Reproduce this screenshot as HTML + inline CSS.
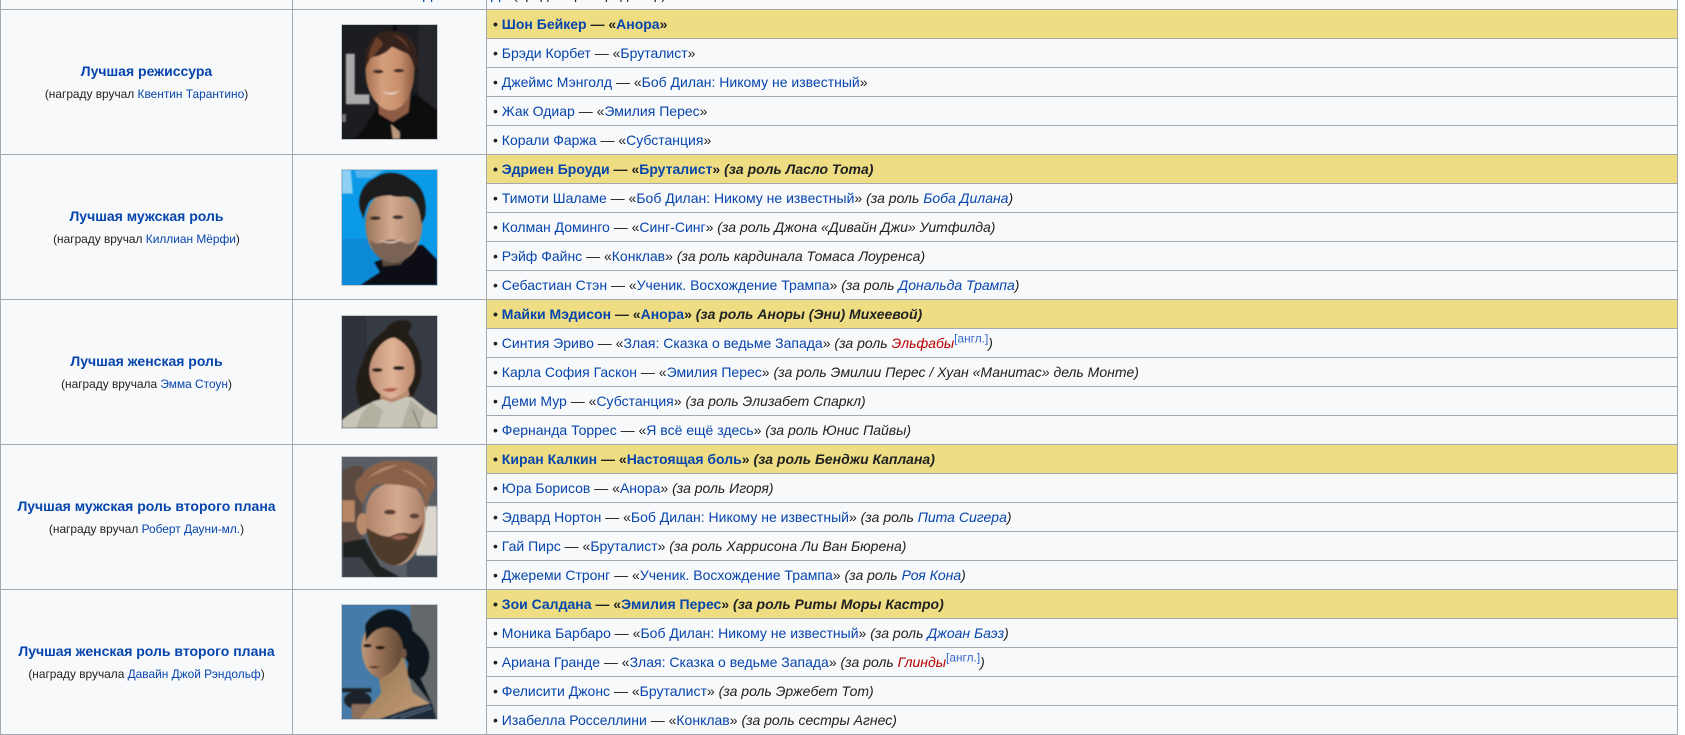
<!DOCTYPE html>
<html lang="ru"><head><meta charset="utf-8"><title>Награды</title>
<style>
html,body{margin:0;padding:0;background:#fff;width:1685px;height:735px;overflow:hidden}
body{position:relative;font-family:"Liberation Sans",Arial,sans-serif;font-size:14px;color:#202122}
a{color:#0645ad;text-decoration:none}
a.new{color:#ba0000}
.bg{position:absolute;left:0;top:0;width:1678px;height:735px;background:#f8f9fa}
.h{position:absolute;left:0;width:1678px;height:1px;background:#a2a9b1}
.v{position:absolute;top:0;width:1px;height:735px;background:#a2a9b1}
.r{position:absolute;left:487px;width:1190px;height:28px;line-height:28px;padding:0;white-space:nowrap;border-bottom:1px solid #a2a9b1;text-indent:6px}
.w{background:#eedd82;font-weight:bold}
.t{position:absolute;left:1px;width:291px;text-align:center;font-weight:bold;line-height:22px;white-space:nowrap}
.s{position:absolute;left:1px;width:291px;text-align:center;font-size:11.9px;line-height:22px;white-space:nowrap}
.p{position:absolute;left:341px;width:95px;border:1px solid #c8ccd1;overflow:hidden}
.p svg{display:block;width:95px;height:100%}
sup{font-size:11.9px;line-height:0;vertical-align:super;font-style:normal}
sup a{color:#36c}
.top{position:absolute;top:-14px;line-height:16px;white-space:nowrap}
</style></head><body>
<div class="bg"></div>
<div class="top" style="left:423px;width:260px;color:#202122"><a href="#">Д</a><span style="position:absolute;left:68px"><a href="#">Д</a></span><span style="position:absolute;left:90px">(продюсер и продюсер)</span></div>
<div class="v" style="left:0"></div><div class="v" style="left:292px"></div><div class="v" style="left:486px"></div><div class="v" style="left:1677px"></div>
<div class="h" style="top:9px"></div><div class="h" style="top:154px"></div><div class="h" style="top:299px"></div><div class="h" style="top:444px"></div><div class="h" style="top:589px"></div><div class="h" style="top:734px"></div>

<div class="t" style="top:60px"><a href="#">Лучшая режиссура</a></div>
<div class="s" style="top:83px">(награду вручал <a href="#">Квентин Тарантино</a>)</div>
<div class="t" style="top:205px"><a href="#">Лучшая мужская роль</a></div>
<div class="s" style="top:228px">(награду вручал <a href="#">Киллиан Мёрфи</a>)</div>
<div class="t" style="top:350px"><a href="#">Лучшая женская роль</a></div>
<div class="s" style="top:373px">(награду вручала <a href="#">Эмма Стоун</a>)</div>
<div class="t" style="top:495px"><a href="#">Лучшая мужская роль второго плана</a></div>
<div class="s" style="top:518px">(награду вручал <a href="#">Роберт Дауни-мл.</a>)</div>
<div class="t" style="top:640px"><a href="#">Лучшая женская роль второго плана</a></div>
<div class="s" style="top:663px">(награду вручала <a href="#">Давайн Джой Рэндольф</a>)</div>

<div class="r w" style="top:10px">• <a href="#">Шон Бейкер</a> — «<a href="#">Анора</a>»</div>
<div class="r" style="top:39px">• <a href="#">Брэди Корбет</a> — «<a href="#">Бруталист</a>»</div>
<div class="r" style="top:68px">• <a href="#">Джеймс Мэнголд</a> — «<a href="#">Боб Дилан: Никому не известный</a>»</div>
<div class="r" style="top:97px">• <a href="#">Жак Одиар</a> — «<a href="#">Эмилия Перес</a>»</div>
<div class="r" style="top:126px">• <a href="#">Корали Фаржа</a> — «<a href="#">Субстанция</a>»</div>

<div class="r w" style="top:155px">• <a href="#">Эдриен Броуди</a> — «<a href="#">Бруталист</a>» <i>(за роль Ласло Тота)</i></div>
<div class="r" style="top:184px">• <a href="#">Тимоти Шаламе</a> — «<a href="#">Боб Дилан: Никому не известный</a>» <i>(за роль <a href="#">Боба Дилана</a>)</i></div>
<div class="r" style="top:213px">• <a href="#">Колман Доминго</a> — «<a href="#">Синг-Синг</a>» <i>(за роль Джона «Дивайн Джи» Уитфилда)</i></div>
<div class="r" style="top:242px">• <a href="#">Рэйф Файнс</a> — «<a href="#">Конклав</a>» <i>(за роль кардинала Томаса Лоуренса)</i></div>
<div class="r" style="top:271px">• <a href="#">Себастиан Стэн</a> — «<a href="#">Ученик. Восхождение Трампа</a>» <i>(за роль <a href="#">Дональда Трампа</a>)</i></div>

<div class="r w" style="top:300px">• <a href="#">Майки Мэдисон</a> — «<a href="#">Анора</a>» <i>(за роль Аноры (Эни) Михеевой)</i></div>
<div class="r" style="top:329px">• <a href="#">Синтия Эриво</a> — «<a href="#">Злая: Сказка о ведьме Запада</a>» <i>(за роль <a class="new" href="#">Эльфабы</a><sup><a href="#">[англ.]</a></sup>)</i></div>
<div class="r" style="top:358px">• <a href="#">Карла София Гаскон</a> — «<a href="#">Эмилия Перес</a>» <i>(за роль Эмилии Перес / Хуан «Манитас» дель Монте)</i></div>
<div class="r" style="top:387px">• <a href="#">Деми Мур</a> — «<a href="#">Субстанция</a>» <i>(за роль Элизабет Спаркл)</i></div>
<div class="r" style="top:416px">• <a href="#">Фернанда Торрес</a> — «<a href="#">Я всё ещё здесь</a>» <i>(за роль Юнис Пайвы)</i></div>

<div class="r w" style="top:445px">• <a href="#">Киран Калкин</a> — «<a href="#">Настоящая боль</a>» <i>(за роль Бенджи Каплана)</i></div>
<div class="r" style="top:474px">• <a href="#">Юра Борисов</a> — «<a href="#">Анора</a>» <i>(за роль Игоря)</i></div>
<div class="r" style="top:503px">• <a href="#">Эдвард Нортон</a> — «<a href="#">Боб Дилан: Никому не известный</a>» <i>(за роль <a href="#">Пита Сигера</a>)</i></div>
<div class="r" style="top:532px">• <a href="#">Гай Пирс</a> — «<a href="#">Бруталист</a>» <i>(за роль Харрисона Ли Ван Бюрена)</i></div>
<div class="r" style="top:561px">• <a href="#">Джереми Стронг</a> — «<a href="#">Ученик. Восхождение Трампа</a>» <i>(за роль <a href="#">Роя Кона</a>)</i></div>

<div class="r w" style="top:590px">• <a href="#">Зои Салдана</a> — «<a href="#">Эмилия Перес</a>» <i>(за роль Риты Моры Кастро)</i></div>
<div class="r" style="top:619px">• <a href="#">Моника Барбаро</a> — «<a href="#">Боб Дилан: Никому не известный</a>» <i>(за роль <a href="#">Джоан Баэз</a>)</i></div>
<div class="r" style="top:648px">• <a href="#">Ариана Гранде</a> — «<a href="#">Злая: Сказка о ведьме Запада</a>» <i>(за роль <a class="new" href="#">Глинды</a><sup><a href="#">[англ.]</a></sup>)</i></div>
<div class="r" style="top:677px">• <a href="#">Фелисити Джонс</a> — «<a href="#">Бруталист</a>» <i>(за роль Эржебет Тот)</i></div>
<div class="r" style="top:706px">• <a href="#">Изабелла Росселлини</a> — «<a href="#">Конклав</a>» <i>(за роль сестры Агнес)</i></div>

<svg width="0" height="0" style="position:absolute"><defs>
<filter id="b" x="-5%" y="-5%" width="110%" height="110%"><feGaussianBlur stdDeviation=".8"/></filter>
<linearGradient id="f1" x1="0" x2="1" y1="0" y2="0"><stop offset="0" stop-color="#a86f50"/><stop offset=".35" stop-color="#d59f7d"/><stop offset=".7" stop-color="#c98f6c"/><stop offset="1" stop-color="#8a5a40"/></linearGradient>
<linearGradient id="f2" x1="0" x2="1" y1="0" y2="0"><stop offset="0" stop-color="#9a7458"/><stop offset=".45" stop-color="#d4ab90"/><stop offset="1" stop-color="#a07c62"/></linearGradient>
<linearGradient id="f3" x1="0" x2="1" y1="0" y2="0"><stop offset="0" stop-color="#c08f75"/><stop offset=".5" stop-color="#e0b397"/><stop offset="1" stop-color="#bd8a6e"/></linearGradient>
<linearGradient id="f4" x1="0" x2="1" y1="0" y2="0"><stop offset="0" stop-color="#b08468"/><stop offset=".55" stop-color="#d5ab90"/><stop offset="1" stop-color="#a97e66"/></linearGradient>
<linearGradient id="f5" x1="0" x2="1" y1="0" y2="0"><stop offset="0" stop-color="#c09878"/><stop offset=".5" stop-color="#8f6a50"/><stop offset="1" stop-color="#5f4636"/></linearGradient>
<linearGradient id="s5" x1="0" x2="1" y1="0" y2="1"><stop offset="0" stop-color="#8f7050"/><stop offset="1" stop-color="#c8a078"/></linearGradient>
</defs></svg>

<div class="p" style="top:24px;height:114px"><svg viewBox="0 0 97 115" preserveAspectRatio="none">
<rect width="97" height="115" fill="#1b1d21"/><rect x="78" width="19" height="115" fill="#25272c"/><rect x="52" width="4" height="30" fill="#0e0f12"/>
<g filter="url(#b)">
<path d="M4 29h9v41h15v10H4z" fill="#a9a9a7"/><rect x="0" y="90" width="4" height="8" fill="#777"/>
<path d="M12 115l10-10 14-22 14 8 24-22 23 17v29z" fill="#0b0b0d"/>
<path d="M36 72l2 18 14 8 16-10 2-20z" fill="#8e5c44"/>
<path d="M50 100l9 8 0 7H52z" fill="#b99a80"/>
<path d="M24 46c0-18 10-28 26-28s24 12 24 28c0 24-12 40-24 40S24 70 24 46z" fill="url(#f1)"/>
<path d="M24 44c-3-20 6-38 24-38 18-1 32 12 29 36-1 2-2 3-3 4-1-8-3-13-7-17-8-3-11-5-16-7-5 5-10 9-20 10-3 3-5 6-7 12z" fill="#34201a"/>
<path d="M36 12c-5 7-9 14-9 24 4-4 11-10 15-17zM52 10c5 3 13 7 17 17-2-9-8-16-17-17z" fill="#6a4029"/>
<ellipse cx="37" cy="47" rx="5.5" ry="1.8" fill="#3a2a25"/><ellipse cx="58" cy="46" rx="5.5" ry="1.8" fill="#3a2a25"/>
<path d="M41 67q10 3 18-1q-8 8-18 1z" fill="#e8d6c8"/>
</g></svg></div>

<div class="p" style="top:169px;height:115px"><svg viewBox="0 0 97 117" preserveAspectRatio="none">
<rect width="97" height="117" fill="#0a9ae8"/><rect y="70" width="40" height="47" fill="#0c8ad6"/>
<g filter="url(#b)">
<path d="M0 0h9l2 24H0z" fill="#8fd0f3"/><path d="M13 0h30L30 8H15z" fill="#55b4ea"/>
<path d="M19 117l20-13-6-10 39-16 10-2 15 15v26z" fill="#0d0f13"/>
<path d="M40 88l2 10 18-2 12-16-6-4z" fill="#5a4a40"/>
<path d="M24 58c-1-18 8-36 26-36 18 0 33 14 32 36-1 20-14 36-30 36-16-1-27-16-28-36z" fill="url(#f2)"/>
<path d="M20 44C13 30 22 12 34 8c8-7 26-7 36 2 12 6 17 20 15 36-1 4-2 6-4 8-1-10-3-18-9-25-8-4-14 0-22-3-8 0-17 1-22 6-3 5-5 11-6 18z" fill="#1c1a1d"/>
<path d="M28 70c2 14 11 24 24 24s21-9 25-24c-4 4-8 6-14 4-9-4-15-5-22 0-6 2-9 0-13-4z" fill="#7a6455"/>
<path d="M37 71q14 5 25-2q-10 10-25 2z" fill="#e6d5c6"/>
<ellipse cx="34" cy="49" rx="5.5" ry="2" fill="#3e2e28"/><ellipse cx="57" cy="48" rx="5.5" ry="2" fill="#3e2e28"/>
</g></svg></div>

<div class="p" style="top:315px;height:112px"><svg viewBox="0 0 97 114" preserveAspectRatio="none">
<rect width="97" height="114" fill="#353a43"/>
<rect x="0" y="0" width="25" height="114" fill="#2e323a"/>
<g filter="url(#b)">
<path d="M22 98C10 78 14 62 22 46c2-14 11-24 23-32 2-8 16-12 25-8 2 6-2 10-3 12 10 10 15 26 14 38 0 8-3 14-6 20-2 6-4 8-6 12z" fill="#241a16"/>
<path d="M0 114v-8c8-8 22-14 30-18 8-4 34-8 42-5 8 6 16 14 25 18v13z" fill="#c9c6b9"/>
<path d="M20 100l10-12 12 8-6 18H14zM70 85l14 12-4 17H60z" fill="#b3b0a2"/>
<path d="M72 95l8 19" stroke="#6f6a5e" fill="none"/>
<path d="M40 70l-1 14 12 4 18-7-3-14z" fill="#b88a70"/>
<path d="M28 56c0-14 12-34 26-34 12 6 20 16 20 34 0 14-11 26-24 28-13-2-22-14-22-28z" fill="url(#f3)"/>
<ellipse cx="36" cy="55" rx="5.5" ry="2" fill="#2a1c18"/><ellipse cx="58" cy="53" rx="6" ry="2" fill="#1f1512"/>
<path d="M41 75q8-3 16-1q-7 6-16 1z" fill="#b35f47"/>
</g></svg></div>

<div class="p" style="top:456px;height:120px"><svg viewBox="0 0 97 122" preserveAspectRatio="none">
<rect width="97" height="122" fill="#5a5f66"/>
<g filter="url(#b)">
<rect x="76" y="50" width="21" height="72" fill="#dcd8cf"/><path d="M66 100h31v22H66z" fill="#3f4853"/>
<path d="M0 14c8-5 16-6 22-4l-2 78H0z" fill="#5a4941"/><path d="M0 44h13v22H0z" fill="#b58765"/>
<ellipse cx="21" cy="68" rx="6" ry="11" fill="#b98a6c"/>
<path d="M24 60c0-20 10-34 32-34s29 14 29 34c0 24-12 50-30 50S24 84 24 60z" fill="url(#f4)"/>
<path d="M22 48c-10-8-12-24-2-28 4-10 20-18 38-16 16 0 36 8 37 24-1 6-6 10-9 28-2-12-3-18-6-22-14-6-28-7-43-6-9 4-12 10-15 20z" fill="#8a6249"/>
<path d="M26 22c8-8 20-14 32-14-10 4-22 8-32 14zM60 12c10 2 22 10 28 20-8-8-16-14-28-20z" fill="#b28b6c"/>
<path d="M25 72c2 20 12 36 28 38 14 0 24-18 30-44-5 8-8 12-14 12-8-2-14 0-20 3-8 0-16-4-24-9z" fill="#4f3a2c"/>
<path d="M50 82q9-5 18-1q-9 6-18 1z" fill="#9c6554"/>
<ellipse cx="49" cy="56" rx="6" ry="2.5" fill="#5a4036"/><ellipse cx="74" cy="60" rx="5" ry="2.5" fill="#5a4036"/>
<path d="M1 87l22-4 16 28 20 11H1z" fill="#1d2024"/><path d="M1 102l18 0 15 20H1z" fill="#3d4249"/>
</g></svg></div>

<div class="p" style="top:604px;height:114px"><svg viewBox="0 0 97 115" preserveAspectRatio="none">
<rect width="97" height="115" fill="#457ba8"/><rect x="70" width="27" height="115" fill="#63686b"/>
<g filter="url(#b)">
<rect x="0" y="84" width="30" height="4" fill="#1a2026"/>
<ellipse cx="16" cy="96" rx="14" ry="9" fill="#1e2429"/><path d="M10 100h22l-8 15H10z" fill="#8e6f5c"/>
<path d="M37 70l25-22 10 40 18 12-10 15H18l22-26z" fill="url(#s5)"/>
<path d="M38 115l34-12 20-4 4 16z" fill="#1b2a3b"/>
<path d="M50 114l40-12M60 114l32-10" stroke="#5f7082" fill="none"/>
<path d="M20 42c0-16 12-28 26-28 12 0 18 12 17 28 0 14-10 28-25 32-12-4-18-16-18-32z" fill="url(#f5)"/>
<path d="M24 20C32 6 48 2 58 6c10 3 14 12 14 20 9 7 18 16 17 28-1 10-4 18-9 20l12 26-20-25c-6 0-6-8-4-16l-5-8c0-14-4-24-14-28-8-2-18 2-25 14z" fill="#10151c"/>
<ellipse cx="63" cy="49" rx="3" ry="5" fill="#6f5240"/>
<ellipse cx="26" cy="41" rx="4.5" ry="1.8" fill="#221610"/><ellipse cx="39" cy="43" rx="5" ry="1.8" fill="#221610"/>
<path d="M27 62q6-1 12 0q-6 4-12 0z" fill="#5f3a2c"/>
</g></svg></div>
</body></html>
